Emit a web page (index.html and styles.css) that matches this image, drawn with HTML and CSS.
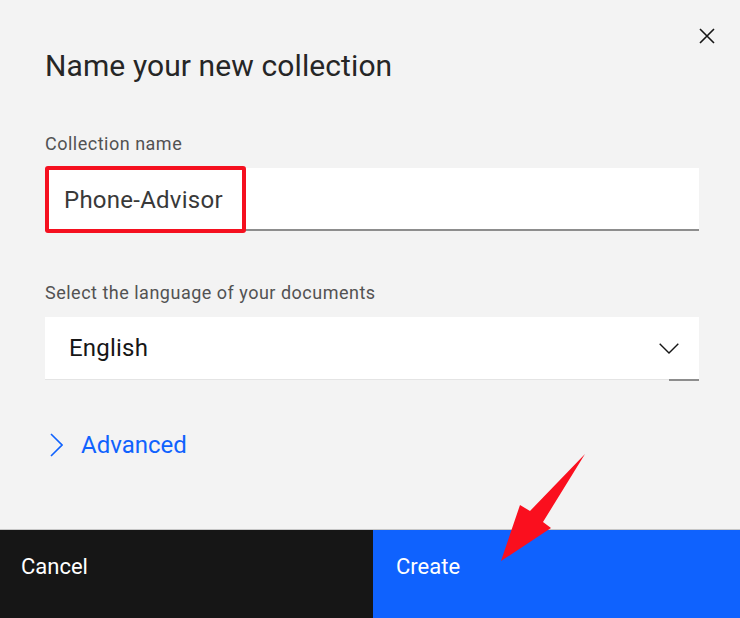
FILE: index.html
```html
<!DOCTYPE html>
<html lang="en">
<head>
<meta charset="utf-8">
<title>Name your new collection</title>
<link rel="stylesheet" href="styles.css">
</head>
<body>
<div class="modal">
  <div class="modal-body">
    <div class="header">
      <h1 class="title">Name your new collection</h1>
      <button class="close" aria-label="Close">
        <svg width="16" height="16" viewBox="0 0 16 16"><path d="M1 1 L15 15 M15 1 L1 15" stroke="#161616" stroke-width="1.6" fill="none"/></svg>
      </button>
    </div>

    <div class="field field-name">
      <label class="label">Collection name</label>
      <div class="input">
        <span class="input-text">Phone-Advisor</span>
        <span class="highlight"></span>
      </div>
    </div>

    <div class="field field-lang">
      <label class="label">Select the language of your documents</label>
      <div class="select">
        <span class="select-text">English</span>
        <svg class="chev-down" width="20" height="11" viewBox="0 0 20 11"><path d="M0.7 0.7 L10 10 L19.3 0.7" stroke="#161616" stroke-width="1.4" fill="none"/></svg>
        <span class="select-mark"></span>
      </div>
    </div>

    <div class="advanced">
      <svg class="chev-right" width="13" height="24" viewBox="0 0 13 24"><path d="M1 1 L12 12 L1 23" stroke="#0f62fe" stroke-width="1.6" fill="none"/></svg>
      <span class="advanced-text">Advanced</span>
    </div>
  </div>

  <div class="footer">
    <button class="btn btn-secondary">Cancel</button>
    <button class="btn btn-primary">Create</button>
  </div>

  <svg class="arrow" width="740" height="618" viewBox="0 0 740 618">
    <polygon points="585,454 543,522 551,528 501,561 520,505 530,511" fill="#fa0f1e"/>
  </svg>
</div>
</body>
</html>
```

FILE: styles.css
```css
* { box-sizing: border-box; }

html, body {
  margin: 0;
  padding: 0;
  background: #f3f3f3;
}

body {
  font-family: Roboto, "Liberation Sans", Arial, sans-serif;
  color: #161616;
}

.modal {
  position: relative;
  width: 740px;
  height: 618px;
  display: flex;
  flex-direction: column;
  overflow: hidden;
}

.modal-body {
  flex: 1;
  padding: 0 41px 0 45px;
}

.header {
  display: flex;
  justify-content: space-between;
  align-items: flex-start;
}

.title {
  margin: 48px 0 0 0;
  font-size: 30px;
  line-height: 36px;
  font-weight: 400;
  letter-spacing: 0.1px;
  color: #262626;
}

.close {
  margin: 28px -16px 0 0;
  padding: 0;
  border: 0;
  background: none;
  width: 16px;
  height: 16px;
  display: block;
}
.close svg { display: block; }

.field { display: flex; flex-direction: column; }
.field-name { margin-top: 49px; }
.field-lang { margin-top: 51px; }

.label {
  font-size: 18px;
  line-height: 22px;
  letter-spacing: 0.5px;
  color: #525252;
  margin-bottom: 13px;
}

.input {
  position: relative;
  height: 63px;
  background: #fff;
  border-bottom: 2px solid #8d8d8d;
  display: flex;
  align-items: center;
  padding: 3px 0 0 19px;
}

.input-text {
  font-size: 24px;
  letter-spacing: 0.25px;
  color: #393939;
}

.highlight {
  position: absolute;
  left: 0;
  top: -2px;
  width: 201px;
  height: 67px;
  border: 4px solid #f5101f;
  border-radius: 3px;
}

.select {
  position: relative;
  height: 63px;
  background: #fff;
  border-bottom: 1px solid #e4e4e4;
  display: flex;
  align-items: center;
  justify-content: space-between;
  padding: 0 20px 0 24px;
}

.select-text {
  font-size: 24px;
  letter-spacing: 0.2px;
  color: #161616;
}

.chev-down { display: block; margin-top: 1px; }

.select-mark {
  position: absolute;
  right: 0;
  bottom: -2px;
  width: 30px;
  height: 2px;
  background: #8d8d8d;
}

.advanced {
  margin-top: 51px;
  display: flex;
  align-items: center;
  gap: 18px;
  padding-left: 5px;
}
.chev-right { display: block; }

.advanced-text {
  font-size: 24px;
  color: #0f62fe;
}

.footer {
  display: flex;
  height: 89px;
  border-top: 1px solid #c6c6c6;
}

.btn {
  border: 0;
  margin: 0;
  font-family: inherit;
  font-size: 22px;
  color: #fff;
  text-align: left;
  display: flex;
  align-items: flex-start;
  padding: 24px 0 0 21px;
  height: 100%;
}

.btn-secondary {
  width: 373px;
  background: #161616;
}

.btn-primary {
  flex: 1;
  background: #0f62fe;
  padding-left: 23px;
}

.arrow {
  position: absolute;
  left: 0;
  top: 0;
  pointer-events: none;
}
```
